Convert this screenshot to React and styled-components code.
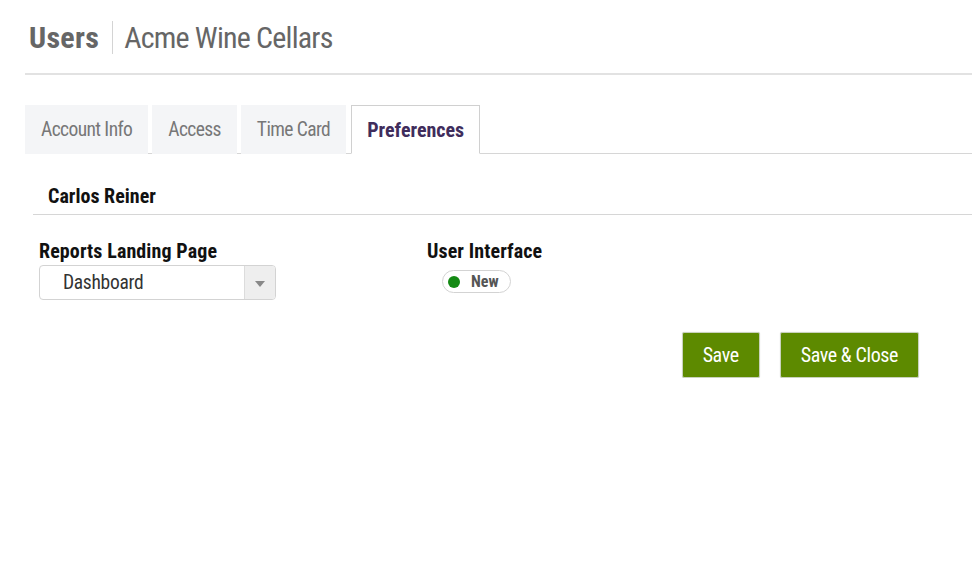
import React from "react";
import styled, { createGlobalStyle } from "styled-components";

const GlobalStyle = createGlobalStyle`
  body {
    margin: 0;
    background: #fff;
    font-family: "Roboto Condensed", "Liberation Sans", sans-serif;
  }
`;

const Page = styled.div`
  padding: 16px 0 0 25px;
`;

const Header = styled.div`
  display: flex;
  align-items: center;
  height: 42px;
  padding: 0 0 15px 4px;
  border-bottom: 2px solid #e2e2e2;
`;

const PageTitle = styled.h1`
  margin: 0;
  font-size: 30px;
  font-weight: 700;
  color: #666;
  letter-spacing: 0.3px;
`;

const Divider = styled.span`
  width: 1px;
  height: 33px;
  background: #d4d4d4;
  margin: 0 11px 0 13px;
`;

const Company = styled.span`
  font-size: 30px;
  color: #666;
  letter-spacing: -0.8px;
`;

const Tabs = styled.div`
  display: flex;
  gap: 4px;
  margin-top: 30px;
  border-bottom: 1px solid #d6d6d6;
`;

const Tab = styled.div`
  height: 49px;
  padding: 0 15px;
  display: flex;
  align-items: center;
  box-sizing: border-box;
  margin-bottom: -1px;
  font-size: ${(p) => (p.active ? "20px" : "19.5px")};
  letter-spacing: ${(p) => (p.active ? "0" : "-0.6px")};
  color: ${(p) => (p.active ? "#3f2d5c" : "#777")};
  font-weight: ${(p) => (p.active ? 700 : 400)};
  background: ${(p) => (p.active ? "#fff" : "#f4f5f7")};
  border: 1px solid ${(p) => (p.active ? "#d0d0d0" : "transparent")};
  border-bottom-color: ${(p) => (p.active ? "#fff" : "transparent")};
  margin-left: ${(p) => (p.active ? "1px" : "0")};
`;

const Section = styled.div`
  margin-left: 8px;
`;

const UserName = styled.h2`
  margin: 0;
  padding: 30px 0 6px 15px;
  font-size: 20px;
  font-weight: 700;
  color: #111;
  border-bottom: 1px solid #d6d6d6;
`;

const Fields = styled.div`
  display: grid;
  grid-template-columns: 388px 1fr;
  padding: 24px 0 0 6px;
`;

const Field = styled.div`
  display: flex;
  flex-direction: column;
  align-items: flex-start;
`;

const Label = styled.label`
  font-size: 20px;
  font-weight: 700;
  color: #111;
  line-height: 24px;
  letter-spacing: 0.1px;
`;

const Select = styled.div`
  margin-top: 2px;
  width: 237px;
  height: 35px;
  box-sizing: border-box;
  border: 1px solid #d3d3d3;
  border-radius: 4px;
  display: flex;
  align-items: stretch;
  overflow: hidden;
`;

const SelectValue = styled.span`
  flex: 1;
  display: flex;
  align-items: center;
  padding-left: 23px;
  font-size: 19.5px;
  letter-spacing: -0.3px;
  color: #333;
`;

const SelectArrow = styled.span`
  width: 30px;
  background: #eeeeee;
  border-left: 1px solid #dcdcdc;
  display: flex;
  align-items: center;
  justify-content: center;

  &::after {
    content: "";
    border-left: 5px solid transparent;
    border-right: 5px solid transparent;
    border-top: 6px solid #888;
    margin-top: 2px;
  }
`;

const Toggle = styled.div`
  margin: 7px 0 0 15px;
  width: 69px;
  height: 23px;
  box-sizing: border-box;
  border: 1px solid #d3d3d3;
  border-radius: 12px;
  display: flex;
  align-items: center;
  gap: 11px;
  padding-left: 5px;
`;

const Dot = styled.span`
  width: 12px;
  height: 12px;
  border-radius: 50%;
  background: #148a14;
`;

const ToggleText = styled.span`
  font-size: 16px;
  font-weight: 700;
  color: #555;
`;

const Actions = styled.div`
  display: flex;
  justify-content: flex-end;
  gap: 20px;
  margin: 32px 53px 0 0;
`;

const Button = styled.button`
  height: 46px;
  padding: 0 20px;
  border: 1px solid #c9d2bd;
  border-radius: 2px;
  background: #5d8a00;
  color: #fff;
  font-family: inherit;
  font-size: 20px;
  letter-spacing: -0.4px;
  cursor: pointer;
  box-shadow: 0 0 1px rgba(0, 0, 0, 0.2);
`;

export default function App() {
  return (
    <>
      <GlobalStyle />
      <Page>
        <Header>
          <PageTitle>Users</PageTitle>
          <Divider />
          <Company>Acme Wine Cellars</Company>
        </Header>

        <Tabs>
          <Tab>Account Info</Tab>
          <Tab>Access</Tab>
          <Tab>Time Card</Tab>
          <Tab active>Preferences</Tab>
        </Tabs>

        <Section>
          <UserName>Carlos Reiner</UserName>
          <Fields>
            <Field>
              <Label>Reports Landing Page</Label>
              <Select>
                <SelectValue>Dashboard</SelectValue>
                <SelectArrow />
              </Select>
            </Field>
            <Field>
              <Label>User Interface</Label>
              <Toggle>
                <Dot />
                <ToggleText>New</ToggleText>
              </Toggle>
            </Field>
          </Fields>
          <Actions>
            <Button>Save</Button>
            <Button>Save &amp; Close</Button>
          </Actions>
        </Section>
      </Page>
    </>
  );
}
